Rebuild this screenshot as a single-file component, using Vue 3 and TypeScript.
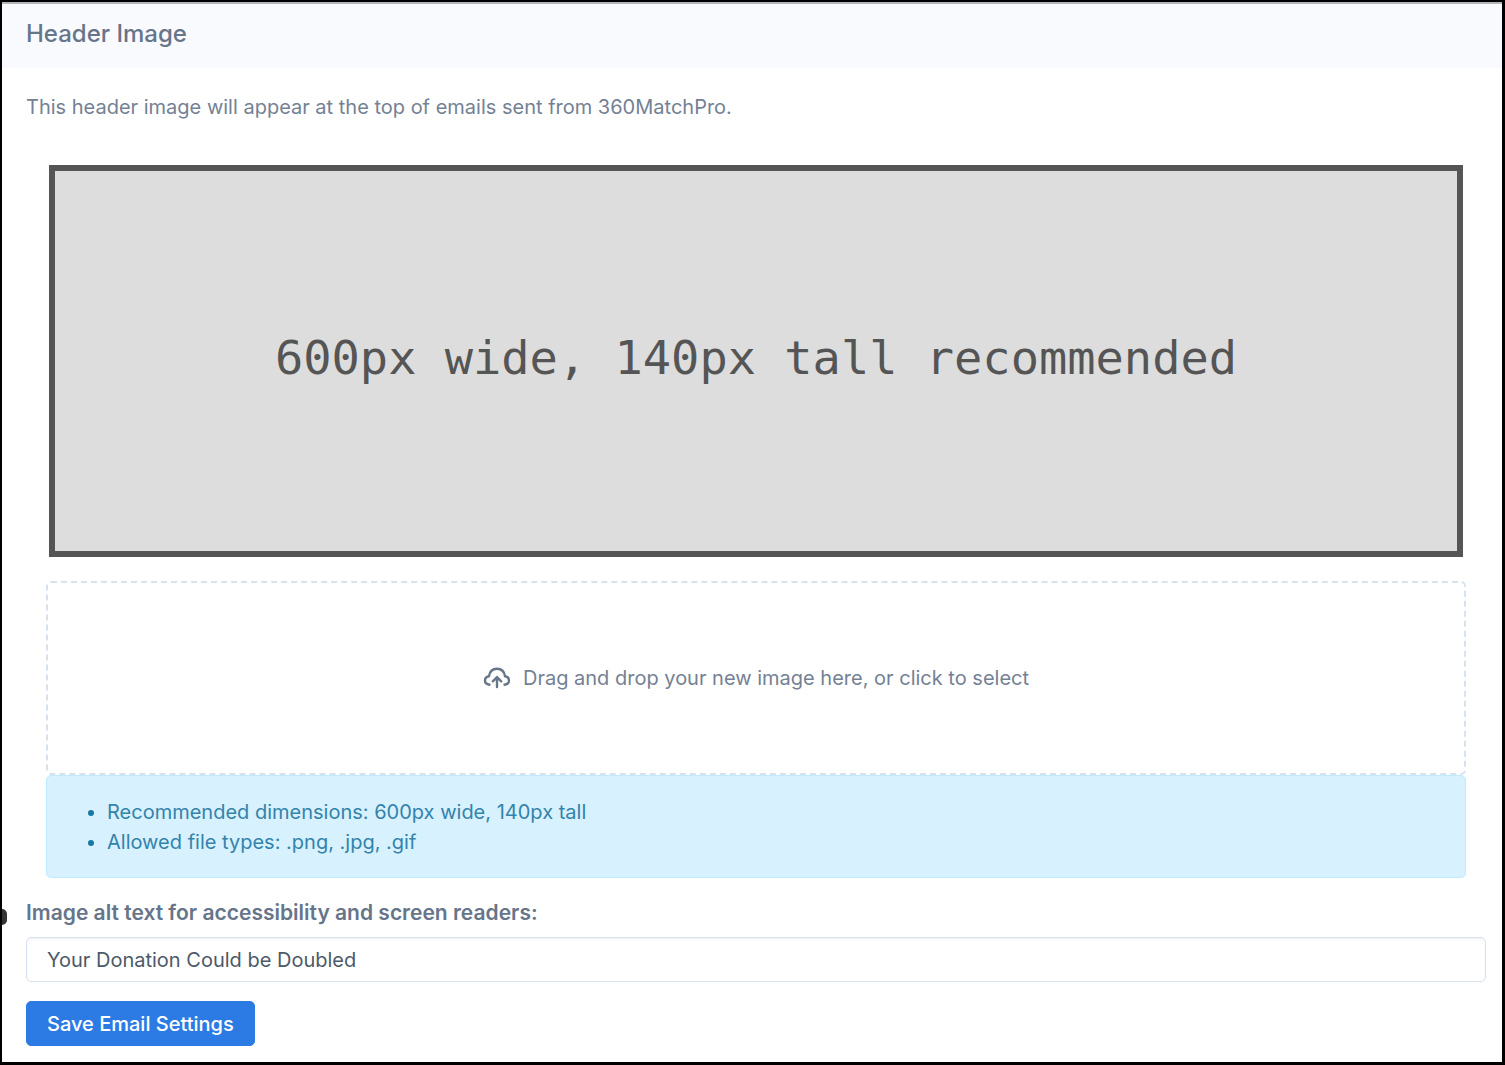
<script setup lang="ts">
import { ref } from 'vue'

const altText = ref('Your Donation Could be Doubled')
const hints: string[] = [
  'Recommended dimensions: 600px wide, 140px tall',
  'Allowed file types: .png, .jpg, .gif',
]
</script>

<template>
  <main class="card">
    <header class="card-header">
      <h1>Header Image</h1>
    </header>
    <form class="card-body" @submit.prevent>
      <p class="intro">This header image will appear at the top of emails sent from 360MatchPro.</p>
      <section class="uploader">
        <div class="preview">600px wide, 140px tall recommended</div>
        <button type="button" class="dropzone">
          <svg class="cloud" viewBox="0 0 28 24" aria-hidden="true">
            <path d="M6.500 18.700C3.900 18.500 2 16.900 2 14.600c0-2.300 1.500-3.900 4-4.300C6.600 5.500 9.800 2.700 14 2.700c4.200 0 7.400 2.800 8 7.600 2.500.400 4 2 4 4.300 0 2.300-1.900 3.900-4.500 4.100" />
            <path d="M14 21V12M9.800 15.300 14 11.100l4.200 4.200" />
          </svg>
          <span>Drag and drop your new image here, or click to select</span>
        </button>
        <ul class="hints">
          <li v-for="hint in hints" :key="hint">{{ hint }}</li>
        </ul>
      </section>
      <div class="label-row">
        <span class="marker" aria-hidden="true"></span>
        <label for="alt-text">Image alt text for accessibility and screen readers:</label>
      </div>
      <input id="alt-text" v-model="altText" class="field" type="text" />
      <button type="submit" class="save">Save Email Settings</button>
    </form>
  </main>
</template>

<style>
body {
  margin: 0;
  background: #fff;
}
</style>

<style scoped>
.card {
  box-sizing: border-box;
  min-height: 100vh;
  border: solid #000;
  border-width: 2px 3px 3px 2px;
  background: #fff;
  color: #748194;
  font-family: Inter, "Liberation Sans", sans-serif;
  font-size: 20px;
  line-height: 30px;
}
.card-header {
  padding: 16px 24px 20px;
  border-top: 2px solid #b4b5b8;
  background: #f9fafd;
}
h1 {
  margin: 0;
  color: #667589;
  font-size: 24px;
  font-weight: 500;
  line-height: 28px;
}
.card-body {
  padding: 24px 16px 14px 24px;
}
.intro {
  margin: 0;
}
.uploader {
  display: flex;
  flex-direction: column;
  margin: 43px 20px 0;
}
.preview {
  display: flex;
  box-sizing: border-box;
  align-items: center;
  justify-content: center;
  height: 392px;
  margin: 0 3px 24px;
  padding-bottom: 6px;
  border: 6px solid #555;
  background: #ddd;
  color: #555;
  font-family: "DejaVu Sans Mono", monospace;
  font-size: 47px;
  line-height: 60px;
}
.dropzone {
  display: flex;
  box-sizing: border-box;
  align-items: center;
  justify-content: center;
  gap: 12px;
  height: 194px;
  padding: 0;
  border: 2px dashed #d8e2ef;
  border-radius: 5px;
  background: none;
  color: inherit;
  font: inherit;
  cursor: pointer;
}
.cloud {
  width: 28px;
  height: 24px;
  fill: none;
  stroke: #66768a;
  stroke-width: 2.4;
  stroke-linecap: round;
  stroke-linejoin: round;
}
.hints {
  margin: 0;
  padding: 21px 20px 20px 60px;
  border: 1px solid #bfebfd;
  border-radius: 5px;
  background: #d7f1fe;
  color: #3383ab;
}
.hints li::marker {
  color: #1978a2;
}
.label-row {
  display: flex;
  position: relative;
  margin: 20px 0 9px;
  color: #667589;
  font-size: 21px;
  font-weight: 600;
}
.marker {
  position: absolute;
  top: 11px;
  left: -24px;
  width: 5px;
  height: 16px;
  border-radius: 0 8px 8px 0;
  background: #333;
}
.field {
  display: block;
  box-sizing: border-box;
  width: 100%;
  height: 45px;
  padding: 0 20px;
  border: 1px solid #d8e2ef;
  border-radius: 5px;
  background: #fff;
  box-shadow: inset 0 1px 2px rgba(0, 0, 0, 0.07);
  color: #4d5969;
  font: inherit;
}
.save {
  display: block;
  height: 45px;
  margin-top: 19px;
  padding: 0 20px;
  border: 1px solid #2c7be5;
  border-radius: 5px;
  background: #2c7be5;
  color: #fff;
  font: inherit;
  font-weight: 500;
  cursor: pointer;
}
</style>
